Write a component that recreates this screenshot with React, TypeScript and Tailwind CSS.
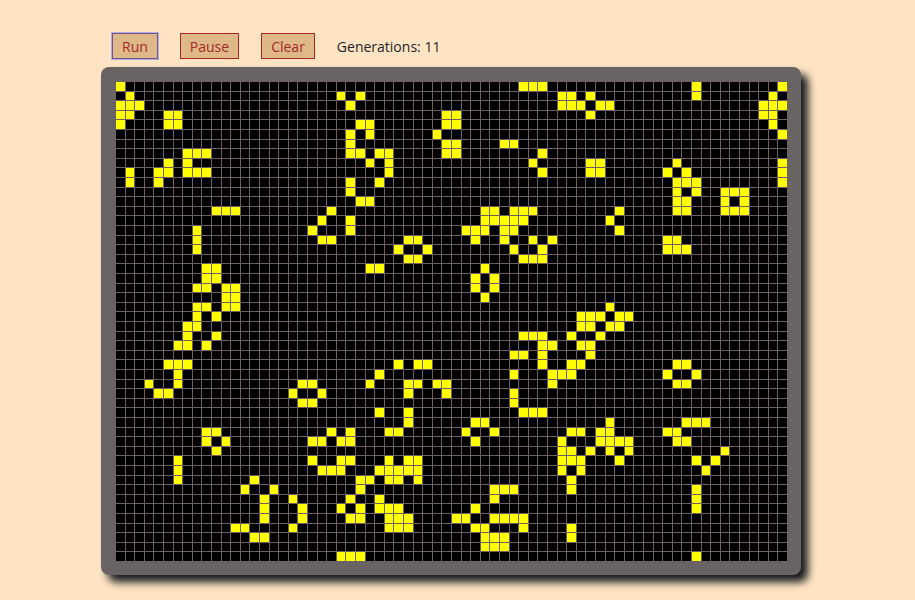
import { useEffect, useState } from "react";

const COLS = 70;
const ROWS = 50;

// Live columns, one entry per row of the board.
const LIVE: number[][] = [
  [0, 42, 43, 44, 60, 69],
  [1, 23, 25, 46, 47, 49, 60, 68],
  [0, 1, 2, 24, 46, 47, 48, 50, 51, 67, 68, 69],
  [0, 1, 5, 6, 34, 35, 49, 67, 68],
  [0, 5, 6, 25, 26, 34, 35, 68],
  [24, 26, 33, 69],
  [24, 34, 35, 40, 41],
  [7, 8, 9, 24, 25, 27, 28, 34, 35, 44],
  [5, 7, 26, 28, 43, 49, 50, 58, 69],
  [1, 4, 5, 7, 8, 9, 28, 44, 49, 50, 57, 59, 69],
  [1, 4, 24, 27, 58, 59, 60, 69],
  [24, 58, 60, 63, 64, 65],
  [25, 26, 58, 59, 63, 65],
  [10, 11, 12, 22, 38, 39, 41, 42, 43, 52, 58, 59, 63, 64, 65],
  [21, 24, 38, 39, 40, 41, 42, 51],
  [8, 20, 24, 36, 37, 38, 40, 41, 52],
  [8, 21, 22, 30, 31, 37, 40, 43, 45, 57, 58],
  [8, 29, 32, 41, 44, 57, 58, 59],
  [30, 31, 42, 43, 44],
  [9, 10, 26, 27, 38],
  [9, 10, 37, 39],
  [8, 9, 11, 12, 37, 39],
  [11, 12, 38],
  [8, 9, 11, 12, 51],
  [8, 10, 48, 49, 50, 52, 53],
  [7, 8, 48, 49, 51, 52],
  [7, 10, 42, 43, 44, 47, 50],
  [6, 7, 9, 44, 45, 48, 49],
  [41, 42, 44, 49],
  [5, 6, 7, 29, 31, 32, 44, 47, 48, 58, 59],
  [6, 27, 41, 45, 46, 47, 57, 60],
  [3, 6, 19, 20, 26, 30, 31, 33, 34, 45, 58, 59],
  [4, 5, 18, 21, 30, 34, 41],
  [19, 20, 41],
  [27, 30, 42, 43, 44],
  [30, 37, 38, 51, 59, 60, 61],
  [9, 10, 22, 24, 28, 29, 36, 39, 47, 48, 50, 51, 57, 58],
  [9, 11, 20, 21, 23, 24, 37, 46, 50, 51, 52, 53, 58, 59],
  [10, 46, 47, 49, 51, 53, 63],
  [6, 20, 23, 24, 28, 30, 31, 46, 47, 48, 52, 60, 62],
  [6, 21, 22, 23, 27, 28, 29, 30, 31, 46, 48, 61],
  [6, 14, 25, 26, 28, 29, 31, 47],
  [13, 16, 25, 39, 40, 41, 47, 60],
  [15, 18, 24, 27, 39, 60],
  [15, 19, 23, 25, 27, 28, 29, 37, 60],
  [15, 19, 24, 25, 28, 29, 30, 35, 36, 39, 40, 41, 42],
  [12, 13, 18, 28, 29, 30, 37, 38, 42, 47],
  [14, 15, 38, 39, 40, 47],
  [38, 39, 40],
  [23, 24, 25, 60],
];

const initialBoard = () =>
  LIVE.map((cols) => Array.from({ length: COLS }, (_, c) => cols.includes(c)));

// The edges of the board wrap round.
function nextBoard(board: boolean[][]) {
  return board.map((row, r) =>
    row.map((alive, c) => {
      let n = 0;
      for (let dr = -1; dr <= 1; dr++) {
        for (let dc = -1; dc <= 1; dc++) {
          if ((dr || dc) && board[(r + dr + ROWS) % ROWS][(c + dc + COLS) % COLS]) n++;
        }
      }
      return n === 3 || (alive && n === 2);
    }),
  );
}

const BUTTON = "h-[26px] border bg-[#deb887] px-[9px] pt-0.5 text-sm leading-5 text-[#a52a2a]";
const PLAIN = "border-[#b22222]";
const SELECTED = "border-[#7b4f94] outline outline-1 outline-[#a9b3dd]";

export default function App() {
  const [board, setBoard] = useState(initialBoard);
  const [generations, setGenerations] = useState(11);
  const [running, setRunning] = useState(false);
  const [selected, setSelected] = useState("run");

  useEffect(() => {
    if (!running) return;
    const timer = setInterval(() => {
      setBoard(nextBoard);
      setGenerations((g) => g + 1);
    }, 100);
    return () => clearInterval(timer);
  }, [running]);

  const run = () => {
    setSelected("run");
    setRunning(true);
  };
  const pause = () => {
    setSelected("pause");
    setRunning(false);
  };
  const clear = () => {
    setSelected("clear");
    setRunning(false);
    setGenerations(0);
    setBoard((b) => b.map((row) => row.map(() => false)));
  };
  const toggle = (r: number, c: number) =>
    setBoard((b) => b.map((row, y) => (y === r ? row.map((v, x) => (x === c ? !v : v)) : row)));

  return (
    <div className="min-h-screen bg-[#ffe4c4] pt-[33px] pr-[13px] font-['Open_Sans','Noto_Sans',sans-serif]">
      <main className="mx-auto w-full max-w-[700px]">
        <div className="mb-2 flex items-center gap-[22px] pl-[11px]">
          <button type="button" onClick={run} className={`${BUTTON} ${selected === "run" ? SELECTED : PLAIN}`}>
            Run
          </button>
          <button type="button" onClick={pause} className={`${BUTTON} ${selected === "pause" ? SELECTED : PLAIN}`}>
            Pause
          </button>
          <button type="button" onClick={clear} className={`${BUTTON} ${selected === "clear" ? SELECTED : PLAIN}`}>
            Clear
          </button>
          <p className="pt-0.5 text-sm leading-5 text-[#212529]">Generations: {generations}</p>
        </div>
        <div className="rounded-lg bg-[#696463] p-[14px] shadow-[7px_7px_8px_#14191c]">
          <div className="grid aspect-[7/5] grid-cols-[repeat(70,minmax(0,1fr))] grid-rows-[repeat(50,minmax(0,1fr))]">
            {board.map((row, r) =>
              row.map((alive, c) => (
                <div
                  key={r * COLS + c}
                  onClick={() => toggle(r, c)}
                  className={`border-t border-l border-[#705f5f] ${alive ? "bg-[#ffff00]" : "bg-black"}`}
                />
              )),
            )}
          </div>
        </div>
      </main>
    </div>
  );
}
